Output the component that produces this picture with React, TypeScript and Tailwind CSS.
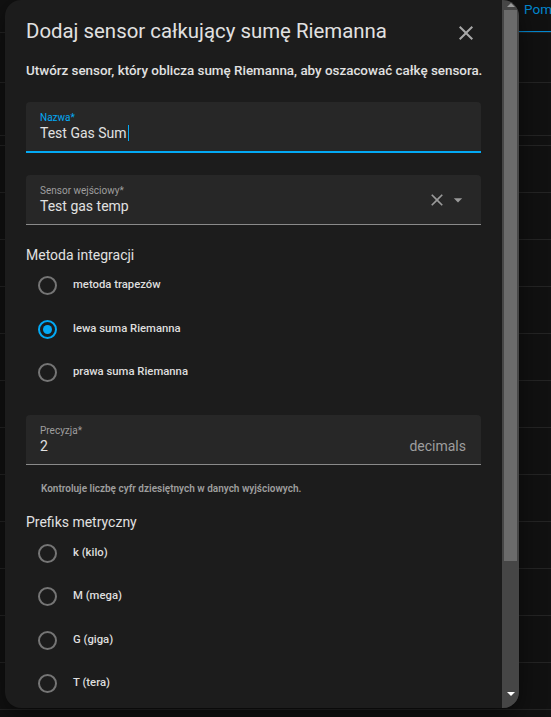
import { FC } from 'react';

const font = { fontFamily: 'Roboto, "Noto Sans", "Liberation Sans", sans-serif' };

const CloseIcon: FC<{ className?: string }> = ({ className }) => (
  <svg viewBox="0 0 24 24" className={className} fill="currentColor">
    <path d="M19,6.41L17.59,5L12,10.59L6.41,5L5,6.41L10.59,12L5,17.59L6.41,19L12,13.41L17.59,19L19,17.59L13.41,12L19,6.41Z" />
  </svg>
);

const MenuDown: FC<{ className?: string }> = ({ className }) => (
  <svg viewBox="0 0 24 24" className={className} fill="currentColor">
    <path d="M7,10L12,15L17,10H7Z" />
  </svg>
);

interface RadioRowProps {
  label: string;
  checked?: boolean;
}

const RadioRow: FC<RadioRowProps> = ({ label, checked }) => (
  <div className="flex h-[43.5px] items-center">
    <span
      className={`ml-[12px] flex h-[19px] w-[19px] items-center justify-center rounded-full border-2 ${
        checked ? 'border-[#03a9f4]' : 'border-[#757575]'
      }`}
    >
      {checked && <span className="h-[9px] w-[9px] rounded-full bg-[#03a9f4]" />}
    </span>
    <span className="ml-[16px] text-[11.3px] font-medium text-[#dedede]">{label}</span>
  </div>
);

// background page rows behind the dialog
const rowHeights = [50, 53, 10, 47, 47, 47, 47, 47, 47, 47, 47, 47, 47, 47, 47];

export default function App() {
  return (
    <div className="relative h-[717px] w-[551px] overflow-hidden bg-[#111111]" style={font}>
      {/* page behind */}
      <div className="flex flex-col">
        <div className="flex h-[33px] border-b border-[#242424]">
          <div className="flex-1" />
          <div className="relative w-[32px] overflow-hidden">
            <span className="block whitespace-nowrap pl-[5px] pt-[1px] text-[13.5px] leading-[16px] text-[#0288d1]">
              Pom
            </span>
            <div className="absolute bottom-[-1px] left-0 right-0 h-[2px] bg-[#0288d1]" />
          </div>
        </div>
        {rowHeights.map((h, i) => (
          <div key={i} className="border-b border-[#242424]" style={{ height: h }} />
        ))}
      </div>

      {/* dialog */}
      <div className="absolute left-[5px] top-0 flex h-[708px] w-[514px] overflow-hidden rounded-[16px] bg-[#1c1c1c] shadow-[0_8px_24px_rgba(0,0,0,0.5)]">
        <div className="flex min-w-0 flex-1 flex-col overflow-hidden px-[21px] pt-[19px]">
          <div className="flex h-[24px] items-center justify-between">
            <h2 className="whitespace-nowrap text-[20.4px] leading-[24px] text-[#e1e1e1]">
              Dodaj sensor całkujący sumę Riemanna
            </h2>
            <CloseIcon className="mr-[3px] mt-[4px] h-[24px] w-[24px] text-[#a8a8a8]" />
          </div>

          <p className="mt-[18px] whitespace-nowrap text-[13.4px] font-medium leading-[20px] text-[#e1e1e1]">
            Utwórz sensor, który oblicza sumę Riemanna, aby oszacować całkę sensora.
          </p>

          {/* Nazwa */}
          <div className="mt-[21px] flex h-[51px] flex-col rounded-t-[4px] border-b-2 border-[#03a9f4] bg-[#272727] px-[14px] pt-[10px]">
            <span className="text-[10px] leading-[12px] text-[#03a9f4]">Nazwa*</span>
            <div className="flex items-center">
              <span className="text-[14px] leading-[18px] text-[#e1e1e1]">Test Gas Sum</span>
              <span className="ml-[1px] h-[16px] w-px bg-[#03a9f4]" />
            </div>
          </div>

          {/* Sensor wejściowy */}
          <div className="mt-[22px] flex h-[50px] items-center rounded-t-[4px] border-b border-[#8a8a8a] bg-[#272727] pl-[14px] pr-[13px]">
            <div className="flex flex-1 flex-col pt-[1px]">
              <span className="text-[10px] leading-[12px] text-[#9e9e9e]">Sensor wejściowy*</span>
              <span className="text-[14px] leading-[18px] text-[#e1e1e1]">Test gas temp</span>
            </div>
            <CloseIcon className="h-[20px] w-[20px] text-[#9a9a9a]" />
            <MenuDown className="ml-[1px] h-[20px] w-[20px] text-[#9a9a9a]" />
          </div>

          <h3 className="mt-[20px] text-[14px] leading-[20px] text-[#e1e1e1]">Metoda integracji</h3>
          <div className="-mt-[1px] flex flex-col">
            <RadioRow label="metoda trapezów" />
            <RadioRow label="lewa suma Riemanna" checked />
            <RadioRow label="prawa suma Riemanna" />
          </div>

          {/* Precyzja */}
          <div className="mt-[20px] flex h-[50px] items-center rounded-t-[4px] border-b border-[#8a8a8a] bg-[#272727] pl-[14px] pr-[15px]">
            <div className="flex flex-1 flex-col pt-[1px]">
              <span className="text-[10px] leading-[12px] text-[#9e9e9e]">Precyzja*</span>
              <span className="text-[14px] leading-[18px] text-[#e1e1e1]">2</span>
            </div>
            <span className="pt-[13px] text-[14px] leading-[18px] text-[#9e9e9e]">decimals</span>
          </div>
          <p className="mt-[17px] pl-[15px] text-[10px] font-semibold leading-[14px] text-[#9e9e9e]">
            Kontroluje liczbę cyfr dziesiętnych w danych wyjściowych.
          </p>

          <h3 className="mt-[16px] text-[14px] leading-[20px] text-[#e1e1e1]">Prefiks metryczny</h3>
          <div className="flex flex-col">
            <RadioRow label="k (kilo)" />
            <RadioRow label="M (mega)" />
            <RadioRow label="G (giga)" />
            <RadioRow label="T (tera)" />
          </div>
        </div>

        {/* scrollbar */}
        <div className="flex w-[17px] flex-col bg-[#464646]">
          <div className="flex h-[10px] items-center justify-center">
            <span className="h-0 w-0 border-x-[4px] border-b-[4px] border-x-transparent border-b-[#9a9a9a]" />
          </div>
          <div className="mx-[2px] h-[551px] bg-[#6b6b6b]" />
          <div className="flex-1" />
          <div className="flex h-[16px] items-start justify-center">
            <span className="h-0 w-0 border-x-[4px] border-t-[4px] border-x-transparent border-t-[#ffffff]" />
          </div>
        </div>
      </div>
    </div>
  );
}
